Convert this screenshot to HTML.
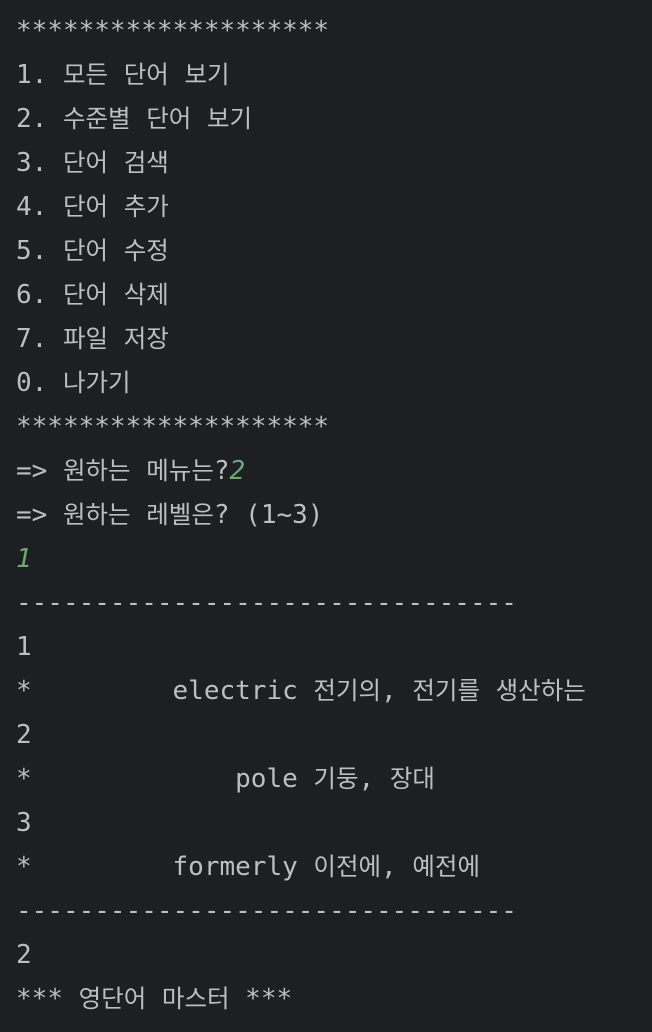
<!DOCTYPE html>
<html><head><meta charset="utf-8"><style>
html,body{margin:0;padding:0;background:#1e1f22;width:652px;height:1032px;overflow:hidden}
.w{padding:9px 0 0 16px;font-family:"DejaVu Sans Mono","Liberation Mono",monospace;font-size:26px;color:#bcbec4}
.w div{height:44px;line-height:44px;white-space:pre;overflow:hidden}
.k{font-family:"Noto Sans CJK KR","NanumGothic",sans-serif;font-size:24.5px;line-height:1;vertical-align:baseline}
.g{color:#6aab73;font-style:italic}
</style></head><body><div class="w">
<div>********************</div>
<div>1. <span class="k">모든</span> <span class="k">단어</span> <span class="k">보기</span></div>
<div>2. <span class="k">수준별</span> <span class="k">단어</span> <span class="k">보기</span></div>
<div>3. <span class="k">단어</span> <span class="k">검색</span></div>
<div>4. <span class="k">단어</span> <span class="k">추가</span></div>
<div>5. <span class="k">단어</span> <span class="k">수정</span></div>
<div>6. <span class="k">단어</span> <span class="k">삭제</span></div>
<div>7. <span class="k">파일</span> <span class="k">저장</span></div>
<div>0. <span class="k">나가기</span></div>
<div>********************</div>
<div>=> <span class="k">원하는</span> <span class="k">메뉴는</span>?<span class="g">2</span></div>
<div>=> <span class="k">원하는</span> <span class="k">레벨은</span>? (1~3)</div>
<div><span class="g">1</span></div>
<div>--------------------------------</div>
<div>1</div>
<div>*         electric <span class="k">전기의</span>, <span class="k">전기를</span> <span class="k">생산하는</span></div>
<div>2</div>
<div>*             pole <span class="k">기둥</span>, <span class="k">장대</span></div>
<div>3</div>
<div>*         formerly <span class="k">이전에</span>, <span class="k">예전에</span></div>
<div>--------------------------------</div>
<div>2</div>
<div>*** <span class="k">영단어</span> <span class="k">마스터</span> ***</div>
</div></body></html>
